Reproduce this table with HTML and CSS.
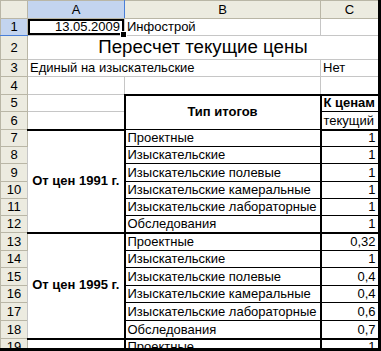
FILE: index.html
```html
<!DOCTYPE html>
<html lang="ru">

<head>
    <meta charset="utf-8">
    <meta name="viewport" content="width=device-width, initial-scale=1.0">
    <title>Пересчет текущие цены</title>
    <link rel="stylesheet" href="styles.css">
</head>

<body>
    <div class="okno">
        <table class="list">
            <colgroup>
                <col class="k-nomer">
                <col class="k-a">
                <col class="k-b">
                <col class="k-c">
            </colgroup>
            <thead>
                <tr class="zag">
                    <th class="ugol"></th>
                    <th class="vybran-kol">A</th>
                    <th>B</th>
                    <th>C</th>
                </tr>
            </thead>
            <tbody>
                <tr class="h17">
                    <th class="vybran-str">1</th>
                    <td class="aktiv chislo">13.05.2009</td>
                    <td>Инфострой</td>
                    <td></td>
                </tr>
                <tr class="h24">
                    <th>2</th>
                    <td colspan="3" class="titul">Пересчет текущие цены</td>
                </tr>
                <tr class="h17">
                    <th>3</th>
                    <td colspan="2">Единый на изыскательские</td>
                    <td>Нет</td>
                </tr>
                <tr class="h18">
                    <th>4</th>
                    <td></td>
                    <td></td>
                    <td></td>
                </tr>
                <tr class="h17">
                    <th>5</th>
                    <td></td>
                    <td rowspan="2" class="tip shapka">Тип итогов</td>
                    <td class="kolonka verh zhirn">К ценам</td>
                </tr>
                <tr class="h18">
                    <th>6</th>
                    <td class="konec"></td>
                    <td class="kolonka konec">текущий</td>
                </tr>
            </tbody>
            <tbody id="itogi"></tbody>
        </table>
    </div>

    <script>
        // строки итогов: группа, подпись, коэффициент
        const vidy = ["Проектные", "Изыскательские", "Изыскательские полевые", "Изыскательские камеральные", "Изыскательские лабораторные", "Обследования"];
        const gruppy = [
            { nazv: "От цен 1991 г.", koef: ["1", "1", "1", "1", "1", "1"], vys: [17, 17, 18, 17, 17, 17] },
            { nazv: "От цен 1995 г.", koef: ["0,32", "1", "0,4", "0,4", "0,6", "0,7"], vys: [18, 17, 18, 17, 18, 18] },
            { nazv: "", koef: ["1"], vys: [17] }
        ];

        const itogi = document.querySelector("#itogi");
        let nomer = 7;

        gruppy.forEach(gr => {
            gr.koef.forEach((k, i) => {
                const posl = i == gr.koef.length - 1 && gr.nazv != "" ? " konec" : "";
                let stroka = `<tr class="h${gr.vys[i]}"><th>${nomer}</th>`;
                if (i == 0) {
                    stroka += `<td rowspan="${gr.koef.length}" class="gruppa">${gr.nazv}</td>`;
                }
                stroka += `<td class="tip${posl}">${vidy[i]}</td><td class="kolonka chislo${posl}">${k}</td></tr>`;
                itogi.insertAdjacentHTML("beforeend", stroka);
                nomer++;
            });
        });
    </script>
</body>

</html>
```

FILE: styles.css
```css
* {
    box-sizing: border-box;
}

body {
    margin: 0;
    padding: 0;
    background: #fff;
    color: #000;
    font-family: "Liberation Sans", Arial, sans-serif;
    font-size: 13px;
}

.okno {
    width: 381px;
    height: 351px;
    overflow: hidden;
    border-right: 3px solid #000;
    border-bottom: 3px solid #000;
}

.list {
    border-collapse: collapse;
    table-layout: fixed;
    width: 378px;
}

.k-nomer {
    width: 27px;
}

.k-a {
    width: 97px;
}

.k-b {
    width: 196px;
}

.k-c {
    width: 58px;
}

.list td {
    border: 1px solid #c6c6c6;
    padding: 0 2px 1px 2px;
    white-space: nowrap;
    overflow: visible;
    vertical-align: bottom;
    line-height: 14px;
}

.list th {
    background: #ecebe0;
    border: 1px solid #b9b6a6;
    font-weight: normal;
    text-align: center;
    padding: 0;
    line-height: 14px;
}

.zag {
    height: 18px;
}

.h17 {
    height: 17px;
}

.h18 {
    height: 18px;
}

.h24 {
    height: 24px;
}

.list .vybran-kol {
    background: #c3d4ef;
    border-right-color: #4a7fd8;
}

.list .vybran-str {
    background: #c3d4ef;
    border-bottom-color: #4a7fd8;
}

.list .chislo {
    text-align: right;
}

.list .aktiv {
    position: relative;
    box-shadow: inset 0 0 0 2px #000;
    padding-right: 4px;
}

/* маркер заполнения в углу активной ячейки */
.aktiv::after {
    content: "";
    position: absolute;
    right: -3px;
    bottom: -3px;
    width: 5px;
    height: 5px;
    background: #000;
    border: 1px solid #fff;
    box-sizing: content-box;
}

.list .titul {
    font-size: 18.7px;
    text-align: center;
    vertical-align: middle;
    line-height: 20px;
}

.zhirn {
    font-weight: bold;
}

.list .tip {
    border-left: 2px solid #000;
    border-right: 2px solid #000;
    border-bottom: 1px solid #000;
}

.list .shapka {
    border-top: 2px solid #000;
    font-weight: bold;
    text-align: center;
    vertical-align: middle;
}

.list .kolonka {
    border-right: 2px solid #000;
    border-bottom: 1px solid #000;
}

.list .verh {
    border-top: 2px solid #000;
}

.list .gruppa {
    font-weight: bold;
    text-align: center;
    vertical-align: middle;
    border-bottom: 2px solid #000;
}

.list .konec {
    border-bottom: 2px solid #000;
}
```
